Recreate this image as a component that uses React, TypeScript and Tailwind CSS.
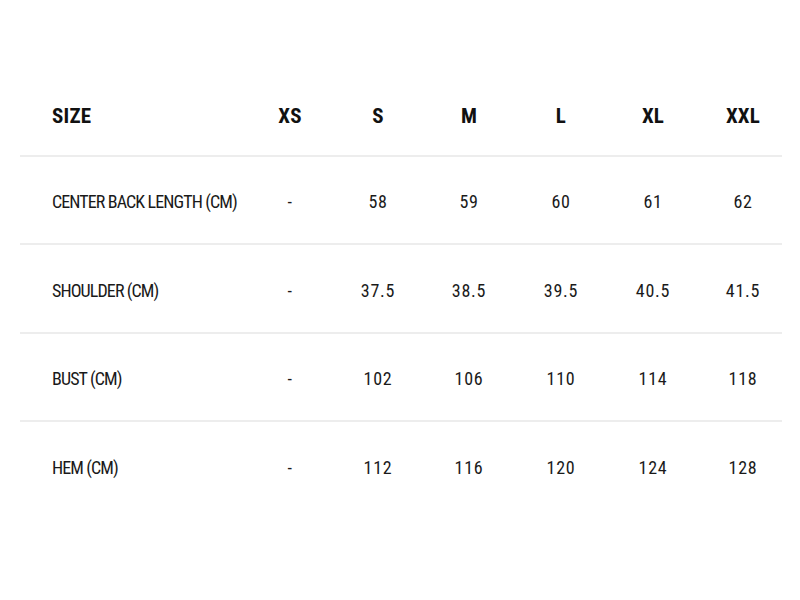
const sizes = ["XS", "S", "M", "L", "XL", "XXL"];
const colW = ["w-[88px]", "w-[88px]", "w-[94px]", "w-[90px]", "w-[94px]", "w-[86px]"];
const rows: { label: string; values: string[] }[] = [
  { label: "CENTER BACK LENGTH (CM)", values: ["-", "58", "59", "60", "61", "62"] },
  { label: "SHOULDER (CM)", values: ["-", "37.5", "38.5", "39.5", "40.5", "41.5"] },
  { label: "BUST (CM)", values: ["-", "102", "106", "110", "114", "118"] },
  { label: "HEM (CM)", values: ["-", "112", "116", "120", "124", "128"] },
];

export default function App() {
  return (
    <div
      className="w-[800px] h-[600px] bg-white pt-[69px] pl-[20px]"
      style={{ fontFamily: "'Roboto Condensed', Roboto, 'Liberation Sans', sans-serif" }}
    >
      <div className="w-[762px]">
        <div className="flex h-[88px] items-center pt-[10px] border-b-2 border-[#ededed] text-[21px] font-bold text-[#111] tracking-[0.01em]">
          <div className="w-[226px] shrink-0 pl-[32px]">SIZE</div>
          {sizes.map((s, j) => (
            <div key={s} className={colW[j] + " shrink-0 text-center"}>
              {s}
            </div>
          ))}
        </div>
        {rows.map((r, i) => (
          <div
            key={r.label}
            className={
              "flex h-[88.4px] items-center pt-[3px] text-[18px] text-[#1a1a1a] " +
              (i < rows.length - 1 ? "border-b-2 border-[#ededed]" : "")
            }
          >
            <div className="w-[226px] shrink-0 pl-[32px] whitespace-nowrap tracking-[-0.05em]">{r.label}</div>
            {r.values.map((v, j) => (
              <div key={j} className={colW[j] + " shrink-0 text-center tracking-[0.04em]"}>
                {v}
              </div>
            ))}
          </div>
        ))}
      </div>
    </div>
  );
}
